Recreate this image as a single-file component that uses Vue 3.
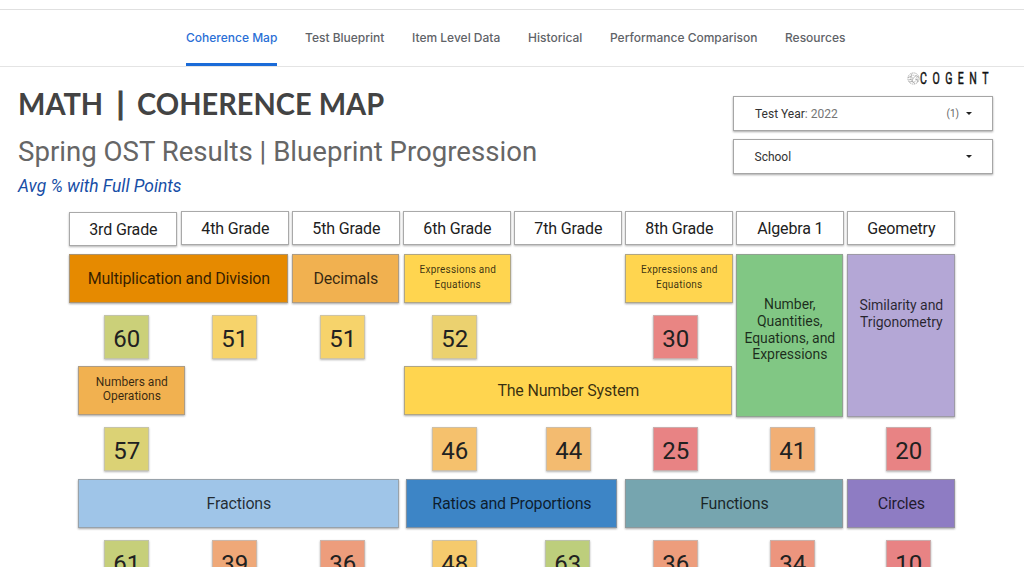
<script setup>
import { ref } from 'vue'

const tabs = [
  { label: 'Coherence Map', width: 91 },
  { label: 'Test Blueprint', width: 79 },
  { label: 'Item Level Data', width: 88 },
  { label: 'Historical', width: 54 },
  { label: 'Performance Comparison', width: 147 },
  { label: 'Resources', width: 60 }
]
const activeTab = ref('Coherence Map')

const grades = ['3rd Grade', '4th Grade', '5th Grade', '6th Grade', '7th Grade', '8th Grade', 'Algebra 1', 'Geometry']

// l / r: inset from the column edges
const topics = [
  { text: 'Multiplication and Division', row: 2, col: 1, span: 2, color: '#e68a00', l: 0, r: 1 },
  { text: 'Decimals', row: 2, col: 3, span: 1, color: '#f1b150', l: 0, r: 1 },
  { text: 'Expressions and Equations', row: 2, col: 4, span: 1, color: '#ffd54f', l: 1, r: 0, size: 'small' },
  { text: 'Expressions and Equations', row: 2, col: 6, span: 1, color: '#ffd54f', l: 0, r: 0, size: 'small' },
  { text: 'Number, Quantities, Equations, and Expressions', row: 2, col: 7, span: 1, color: '#81c784', l: 0, r: 1, size: 'tall' },
  { text: 'Similarity and Trigonometry', row: 2, col: 8, span: 1, color: '#b4a7d6', l: 0, r: 0, size: 'tall top' },
  { text: 'Numbers and Operations', row: 4, col: 1, span: 1, color: '#f1b150', l: 9, r: -7, size: 'medium' },
  { text: 'The Number System', row: 4, col: 4, span: 3, color: '#ffd54f', l: 1, r: 1 },
  { text: 'Fractions', row: 6, col: 1, span: 3, color: '#9fc5e8', l: 9, r: 1 },
  { text: 'Ratios and Proportions', row: 6, col: 4, span: 2, color: '#3d85c6', l: 3, r: 5 },
  { text: 'Functions', row: 6, col: 6, span: 2, color: '#76a5af', l: 0, r: 1 },
  { text: 'Circles', row: 6, col: 8, span: 1, color: '#8e7cc3', l: 0, r: 0 }
]

const scores = [
  { value: 60, row: 3, col: 1, color: '#cbd079', l: 35 },
  { value: 51, row: 3, col: 2, color: '#f6d36b', l: 31 },
  { value: 51, row: 3, col: 3, color: '#f6d36b', l: 28 },
  { value: 52, row: 3, col: 4, color: '#ebd16f', l: 29 },
  { value: 30, row: 3, col: 6, color: '#e98583', l: 28 },
  { value: 57, row: 5, col: 1, color: '#dbd275', l: 35 },
  { value: 46, row: 5, col: 4, color: '#f5c16d', l: 29 },
  { value: 44, row: 5, col: 5, color: '#f3bb70', l: 32 },
  { value: 25, row: 5, col: 6, color: '#e88384', l: 28 },
  { value: 41, row: 5, col: 7, color: '#f1af75', l: 34 },
  { value: 20, row: 5, col: 8, color: '#e88384', l: 39 },
  { value: 61, row: 7, col: 1, color: '#c6cf7a', l: 35 },
  { value: 39, row: 7, col: 2, color: '#efa878', l: 31 },
  { value: 36, row: 7, col: 3, color: '#ed9d7c', l: 28 },
  { value: 48, row: 7, col: 4, color: '#f5ca6d', l: 29 },
  { value: 63, row: 7, col: 5, color: '#bdce7c', l: 31 },
  { value: 36, row: 7, col: 6, color: '#ed9d7c', l: 28 },
  { value: 34, row: 7, col: 7, color: '#ec957e', l: 34 },
  { value: 10, row: 7, col: 8, color: '#e88384', l: 39 }
]

const topicStyle = (t) => ({
  gridRow: t.row,
  gridColumn: `${t.col} / span ${t.span}`,
  background: t.color,
  marginLeft: `${t.l}px`,
  marginRight: `${t.r}px`
})

const scoreStyle = (s) => ({
  gridRow: s.row,
  gridColumn: s.col,
  background: s.color,
  marginLeft: `${s.l}px`
})
</script>

<template>
  <div class="page">
    <nav class="tabs">
      <a
        v-for="tab in tabs"
        :key="tab.label"
        class="tab"
        :class="{ active: tab.label === activeTab }"
        :style="{ width: tab.width + 'px' }"
        @click="activeTab = tab.label"
      >{{ tab.label }}</a>
    </nav>

    <header class="header">
      <div class="titles">
        <h1>MATH <span class="bar">|</span> COHERENCE MAP</h1>
        <h2>Spring OST Results | Blueprint Progression</h2>
        <p class="note">Avg % with Full Points</p>
      </div>

      <div class="side">
        <div class="brand">
          <svg class="brand-icon" width="13" height="13" viewBox="0 0 13 13" fill="none" stroke="#888" stroke-width="0.6">
            <circle cx="6.5" cy="6.5" r="5.6" stroke-dasharray="1.6 0.6" />
            <circle cx="6.8" cy="6.5" r="3.2" stroke-dasharray="1.2 0.8" />
            <path d="M1 5.5l3-1 1-3M4 4.5l2 2 3-3M6 6.5l-1 3 3 2M5 9.5l-3 .5M9 3.5l3 2M8 7l3 1-1 2.5M1.5 8l3.5-1" />
          </svg>
          <span class="brand-name">COGENT</span>
        </div>
        <div class="select">
          <span class="select-label">Test Year<span class="muted">: 2022</span></span>
          <span class="count">(1)</span>
          <i class="caret"></i>
        </div>
        <div class="select second">
          <span class="select-label">School</span>
          <i class="caret"></i>
        </div>
      </div>
    </header>

    <main class="map">
      <div v-for="grade in grades" :key="grade" class="grade"><span>{{ grade }}</span></div>
      <div
        v-for="(t, i) in topics"
        :key="'t' + i"
        class="topic"
        :class="t.size"
        :style="topicStyle(t)"
      ><span>{{ t.text }}</span></div>
      <div v-for="(s, i) in scores" :key="'s' + i" class="score" :style="scoreStyle(s)">{{ s.value }}</div>
    </main>
  </div>
</template>

<style>
body {
  overflow: hidden;
}
</style>

<style scoped>
.page {
  width: 1024px;
  height: 567px;
  overflow: hidden;
  box-sizing: border-box;
  padding-top: 9px;
  background: #fff;
  font-family: Roboto, "Liberation Sans", sans-serif;
  color: #212121;
}

.tabs {
  display: flex;
  gap: 28px;
  box-sizing: border-box;
  height: 58px;
  padding-left: 186px;
  border-top: 1px solid #e0e0e0;
  border-bottom: 1px solid #e4e4e4;
}

.tab {
  box-sizing: border-box;
  height: 56px;
  line-height: 55px;
  font-family: Inter, sans-serif;
  font-size: 12px;
  font-weight: 500;
  color: #5f6368;
  white-space: nowrap;
  cursor: pointer;
}

.tab.active {
  color: #2a6fd6;
  background: linear-gradient(#1a6bd8, #1a6bd8) bottom / 100% 3px no-repeat;
}

.header {
  display: flex;
  justify-content: space-between;
  height: 144px;
  padding: 0 31px 0 18px;
}

h1 {
  width: 519px;
  margin: 16px 0 0;
  font-family: Lato, sans-serif;
  font-size: 31px;
  font-weight: 700;
  line-height: 40px;
  color: #434343;
  white-space: nowrap;
  transform: scaleX(0.935);
  transform-origin: left center;
}

.bar {
  margin: 0 6px 0 7px;
  -webkit-text-stroke: 1px #434343;
}

h2 {
  margin: 10px 0 0;
  font-size: 27.6px;
  font-weight: 400;
  line-height: 38px;
  color: #666;
  white-space: nowrap;
}

.note {
  margin: 4px 0 0;
  font-size: 17.4px;
  font-style: italic;
  line-height: 22px;
  color: #174ea6;
}

.side {
  width: 260px;
}

.brand {
  display: flex;
  align-items: center;
  height: 22px;
  padding-left: 174px;
}

.brand-icon {
  flex-shrink: 0;
}

.brand-name {
  font-size: 16.5px;
  font-weight: 400;
  letter-spacing: 8.6px;
  color: #111;
  -webkit-text-stroke: 0.5px #111;
  transform: scaleX(0.64);
  transform-origin: left center;
}

.select {
  display: flex;
  align-items: center;
  box-sizing: border-box;
  width: 260px;
  height: 35px;
  margin-top: 7px;
  padding: 0 20px 0 21px;
  border: 1px solid #a6a6a6;
  box-shadow: 0 1px 2px rgba(0, 0, 0, 0.35);
  font-size: 12px;
}

.select.second {
  margin: 8px 0 0 -0.5px;
}

.select-label {
  flex: 1;
  color: #333;
}

.muted {
  color: #757575;
}

.count {
  margin-right: 7px;
  font-size: 10px;
  color: #666;
}

.caret {
  border: 3px solid transparent;
  border-top: 3px solid #222;
  border-bottom: 0;
}

.map {
  display: grid;
  grid-template-columns: 109px repeat(7, 108px);
  grid-template-rows: 43px 49px 63px 49px 64px 49px 64px;
  column-gap: 3px;
  margin-left: 69.3px;
  width: 886px;
}

.grade {
  display: flex;
  align-items: center;
  justify-content: center;
  box-sizing: border-box;
  height: 34px;
  border: 1px solid #a9a9a9;
  box-shadow: 0 1px 2px rgba(0, 0, 0, 0.3);
  font-size: 16px;
  letter-spacing: -0.15px;
}

.grade:first-child {
  margin: 1px 1px 0 0;
}

.topic {
  display: flex;
  align-items: center;
  justify-content: center;
  box-sizing: border-box;
  border: 1px solid rgba(150, 150, 150, 0.75);
  box-shadow: 0 1px 2px rgba(0, 0, 0, 0.35);
  font-size: 16px;
  letter-spacing: -0.19px;
  text-align: center;
  color: rgba(0, 0, 0, 0.78);
}

.topic.small {
  padding: 0 14px 2px;
  font-size: 10px;
  line-height: 14.5px;
  letter-spacing: 0.23px;
}

.topic.medium {
  padding: 0 14px 3px;
  font-size: 12px;
  line-height: 14.5px;
  letter-spacing: 0;
}

.topic.tall {
  height: 163px;
  padding: 0 6px 12px;
  font-size: 14px;
  line-height: 16.7px;
  letter-spacing: -0.05px;
}

.topic.tall.top {
  align-items: flex-start;
  padding-top: 42px;
}

.score {
  display: flex;
  align-items: center;
  justify-content: center;
  box-sizing: border-box;
  width: 45px;
  height: 44px;
  margin-top: 12px;
  padding-top: 4px;
  border: 1px solid rgba(190, 190, 190, 0.7);
  box-shadow: 0 1px 2px rgba(0, 0, 0, 0.3);
  font-size: 24px;
}
</style>
